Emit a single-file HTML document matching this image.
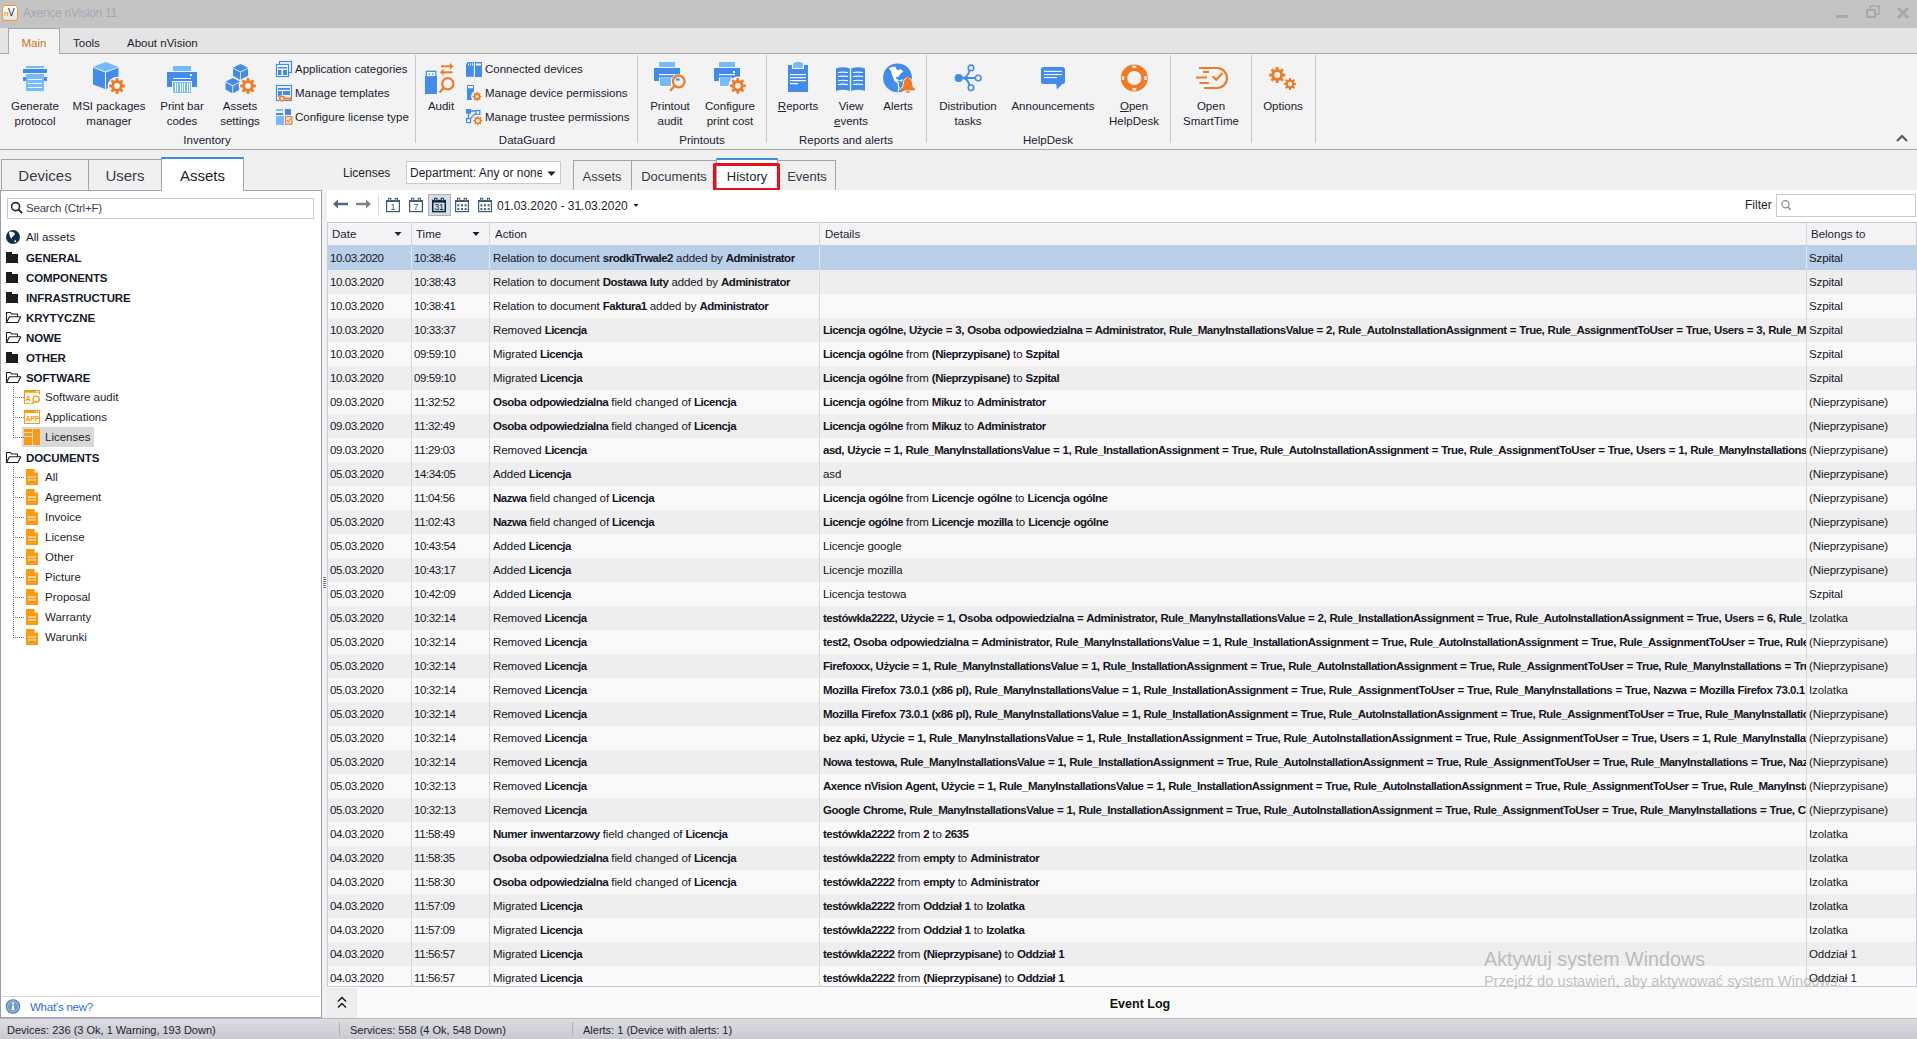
<!DOCTYPE html><html><head><meta charset="utf-8"><title>Axence nVision 11</title><style>
*{box-sizing:border-box}
html,body{margin:0;padding:0}
body{width:1917px;height:1039px;position:relative;overflow:hidden;background:#f0f0f0;font-family:"Liberation Sans",sans-serif;color:#1e1e2e;font-size:12px}
.a{position:absolute;white-space:nowrap}
b{font-weight:bold}
.rib{font-size:11.5px;color:#202030;text-align:center;line-height:15px}
.gl{font-size:11.5px;color:#202030}
.sm{font-size:11.5px;color:#202030}
.sep{position:absolute;width:1px;background:#c8c8c8}
.tree{font-size:12px;color:#1e1e2e}
.tb{font-weight:bold;font-size:12px;color:#101828}
.row{position:absolute;left:328px;width:1588px;height:24px;font-size:11.5px;line-height:24px;color:#15151f}
.c{position:absolute;top:0;height:24px;overflow:hidden;white-space:nowrap;letter-spacing:-0.1px}
.c b{letter-spacing:-0.5px;word-spacing:0.6px}
.c.d{letter-spacing:-0.4px}
.vl{position:absolute;top:0;width:1px;height:24px;background:#d6d6dc}
</style></head><body>
<div class="a" style="left:0;top:0;width:1917px;height:28px;background:#c4c4c4"></div>
<div class="a" style="left:2px;top:5px;width:16px;height:16px;border:1.5px solid #f59a1b;border-radius:3px;background:linear-gradient(#ffffff,#e4e4e4)"></div>
<div class="a" style="left:4px;top:6px;font-size:10px;line-height:14px;letter-spacing:-0.5px"><span style="color:#e8800c;font-size:8px">n</span><span style="color:#1a2a40">V</span></div>
<div class="a" style="left:23px;top:4.5px;font-size:12px;line-height:16px;color:#a6a6b4;letter-spacing:-0.25px">Axence nVision 11</div>
<div class="a" style="left:1836px;top:14.5px;width:12px;height:3px;background:#a8a8a8"></div>
<svg class="a" style="left:1866px;top:5px" width="14" height="14" viewBox="0 0 14 14"><rect x="1" y="5" width="8" height="7" fill="none" stroke="#a8a8a8" stroke-width="2"/><path d="M4 4V1h9v8h-3" fill="none" stroke="#a8a8a8" stroke-width="1.6"/></svg>
<svg class="a" style="left:1896px;top:6px" width="14" height="14" viewBox="0 0 14 14"><path d="M2 2L12 12M12 2L2 12" stroke="#a8a8a8" stroke-width="2.6"/></svg>
<div class="a" style="left:0;top:28px;width:1917px;height:26px;background:#e4e4e4;border-bottom:1px solid #a8a8a8"></div>
<div class="a" style="left:8px;top:28px;width:52px;height:27px;background:#f3f3f3;border:1px solid #a8a8a8;border-bottom:none"></div>
<div class="a" style="left:21.5px;top:35.5px;font-size:11.5px;line-height:14px;color:#c8781a">Main</div>
<div class="a" style="left:73px;top:35.5px;font-size:11.5px;line-height:14px;color:#1e1e2e">Tools</div>
<div class="a" style="left:127px;top:35.5px;font-size:11.5px;line-height:14px;color:#1e1e2e">About nVision</div>
<div class="a" style="left:0;top:54px;width:1917px;height:96px;background:#f3f3f3;border-bottom:1px solid #a8a8a8"></div>
<div class="sep" style="left:415px;top:55px;height:88px"></div>
<div class="sep" style="left:637px;top:55px;height:88px"></div>
<div class="sep" style="left:766px;top:55px;height:88px"></div>
<div class="sep" style="left:926px;top:55px;height:88px"></div>
<div class="sep" style="left:1170px;top:55px;height:88px"></div>
<div class="sep" style="left:1251px;top:55px;height:88px"></div>
<div class="sep" style="left:1315px;top:55px;height:88px"></div>
<svg class="a" style="left:0;top:0" width="1917" height="150" viewBox="0 0 1917 150"><rect x="26" y="66" width="18" height="2" fill="#73bbfd"/><rect x="23" y="69" width="24" height="4" fill="#418cea"/><rect x="23" y="77" width="24" height="4" fill="#418cea"/><rect x="26" y="74" width="18" height="17" fill="#73bbfd"/><rect x="28" y="79" width="14" height="1" fill="#fff"/><rect x="28" y="83" width="14" height="1" fill="#fff"/><rect x="28" y="87" width="14" height="1" fill="#fff"/><polygon points="93,67 105.5,62 118.5,67 105.5,71.5" fill="#73bbfd"/><polygon points="93,67.8 105,72.5 105,89 93,84.5" fill="#418cea"/><polygon points="106,72.5 118.5,67.8 118.5,84.5 106,89" fill="#418cea"/><circle cx="117.00" cy="86.00" r="9.30" fill="#f3f3f3"/><polygon points="122.58,84.58 124.90,84.71 124.90,87.29 122.58,87.42 121.95,88.95 123.50,90.67 121.67,92.50 119.95,90.95 118.42,91.58 118.29,93.90 115.71,93.90 115.58,91.58 114.05,90.95 112.33,92.50 110.50,90.67 112.05,88.95 111.42,87.42 109.10,87.29 109.10,84.71 111.42,84.58 112.05,83.05 110.50,81.33 112.33,79.50 114.05,81.05 115.58,80.42 115.71,78.10 118.29,78.10 118.42,80.42 119.95,81.05 121.67,79.50 123.50,81.33 121.95,83.05" fill="#ef7b26"/><circle cx="117.00" cy="86.00" r="5.36" fill="#ef7b26"/><circle cx="117.00" cy="86.00" r="2.88" fill="#f3f3f3"/><rect x="173" y="66" width="18" height="5" fill="#73bbfd"/><rect x="167" y="72" width="30" height="15" fill="#418cea"/><rect x="190" y="74" width="2" height="2" fill="#fff"/><rect x="173" y="78" width="18" height="1" fill="#fff"/><rect x="172" y="81" width="20" height="13" fill="#fff"/><rect x="173" y="82" width="18" height="11" fill="#73bbfd"/><rect x="175" y="83" width="1" height="9" fill="#fff"/><rect x="177" y="83" width="1" height="9" fill="#fff"/><rect x="180" y="83" width="1" height="9" fill="#fff"/><rect x="182" y="83" width="1" height="9" fill="#fff"/><rect x="184" y="83" width="1" height="9" fill="#fff"/><rect x="187" y="83" width="1" height="9" fill="#fff"/><rect x="189" y="83" width="1" height="9" fill="#fff"/><polygon points="233.0,67.8 240.5,64.0 248.0,67.8 240.5,71.5" fill="#418cea"/><polygon points="233.0,68.5 240.1,72.3 240.1,79.8 233.0,76.0" fill="#418cea"/><polygon points="240.9,72.3 248.0,68.5 248.0,76.0 240.9,79.8" fill="#418cea"/><polygon points="225.5,81.6 232.8,78.0 240.0,81.6 232.8,85.2" fill="#418cea"/><polygon points="225.5,82.4 232.3,86.0 232.3,93.2 225.5,89.6" fill="#418cea"/><polygon points="233.2,86.0 240.0,82.4 240.0,89.6 233.2,93.2" fill="#418cea"/><circle cx="248.00" cy="86.00" r="9.30" fill="#f3f3f3"/><polygon points="253.58,84.58 255.90,84.71 255.90,87.29 253.58,87.42 252.95,88.95 254.50,90.67 252.67,92.50 250.95,90.95 249.42,91.58 249.29,93.90 246.71,93.90 246.58,91.58 245.05,90.95 243.33,92.50 241.50,90.67 243.05,88.95 242.42,87.42 240.10,87.29 240.10,84.71 242.42,84.58 243.05,83.05 241.50,81.33 243.33,79.50 245.05,81.05 246.58,80.42 246.71,78.10 249.29,78.10 249.42,80.42 250.95,81.05 252.67,79.50 254.50,81.33 252.95,83.05" fill="#ef7b26"/><circle cx="248.00" cy="86.00" r="5.36" fill="#ef7b26"/><circle cx="248.00" cy="86.00" r="2.88" fill="#f3f3f3"/><rect x="279.5" y="61.5" width="12" height="11" fill="none" stroke="#418cea" stroke-width="1.2"/><rect x="276.5" y="64.5" width="12" height="12" fill="#fff" stroke="#418cea" stroke-width="1.2"/><rect x="278" y="67" width="9" height="1.5" fill="#418cea"/><rect x="278" y="70" width="3.5" height="5" fill="#418cea"/><rect x="283" y="70" width="4" height="5" fill="#418cea"/><rect x="276.5" y="85.5" width="15" height="15" fill="none" stroke="#418cea" stroke-width="1.2"/><rect x="278" y="88" width="12" height="1.8" fill="#418cea"/><rect x="278" y="91" width="4" height="6" fill="#418cea"/><rect x="283" y="91" width="7" height="4" fill="#418cea"/><circle cx="282" cy="98.5" r="3.2" fill="#f3f3f3"/><circle cx="282" cy="98.5" r="2.3" fill="none" stroke="#ef7b26" stroke-width="1.6"/><rect x="284" y="97.5" width="8" height="2" fill="#ef7b26"/><rect x="289" y="98" width="1.5" height="3" fill="#ef7b26"/><rect x="276" y="109" width="7" height="2" fill="#73bbfd"/><rect x="276" y="113" width="7" height="2" fill="#418cea"/><rect x="276" y="116" width="8" height="9" fill="#73bbfd"/><rect x="285" y="109" width="6" height="6" fill="#418cea"/><rect x="285.6" y="116.6" width="6.3" height="7.6" fill="none" stroke="#ef7b26" stroke-width="1.2"/><path d="M286.8 120 L288.3 122 L291 118" fill="none" stroke="#ef7b26" stroke-width="1.2"/><rect x="425" y="76" width="12" height="18" fill="#418cea"/><rect x="426.3" y="71.3" width="9.5" height="5.5" fill="#fff" stroke="#418cea" stroke-width="1.3"/><rect x="428.5" y="73.3" width="1.4" height="1.6" fill="#418cea"/><rect x="432" y="73.3" width="1.4" height="1.6" fill="#418cea"/><rect x="441" y="65.3" width="10" height="2" fill="#ef7b26"/><polygon points="450,62.8 453.5,66.3 450,69.8" fill="#ef7b26"/><rect x="442.5" y="71.3" width="10" height="2" fill="#ef7b26"/><polygon points="443.5,68.8 440,72.3 443.5,75.8" fill="#ef7b26"/><circle cx="447.8" cy="83.7" r="5.6" fill="none" stroke="#ef7b26" stroke-width="2.2"/><path d="M443.8 87.8 L439.5 92.5" stroke="#ef7b26" stroke-width="2.4"/><path d="M466 64.5 L467.5 62 H473.8 V76.8 H466 Z" fill="#418cea"/><rect x="475" y="62" width="7" height="15" fill="#418cea"/><rect x="468" y="63.5" width="0.9" height="2" fill="#fff"/><rect x="470" y="63.3" width="0.9" height="2.2" fill="#fff"/><rect x="472" y="63.3" width="0.9" height="2.2" fill="#fff"/><rect x="476" y="63.5" width="5" height="2" fill="#fff"/><rect x="467" y="85" width="7" height="15" fill="#418cea"/><rect x="468" y="86" width="5" height="2.2" fill="#fff"/><circle cx="477.00" cy="96.50" r="5.90" fill="#f3f3f3"/><polygon points="480.21,95.69 481.54,95.76 481.54,97.24 480.21,97.31 479.85,98.19 480.73,99.19 479.69,100.23 478.69,99.35 477.81,99.71 477.74,101.04 476.26,101.04 476.19,99.71 475.31,99.35 474.31,100.23 473.27,99.19 474.15,98.19 473.79,97.31 472.46,97.24 472.46,95.76 473.79,95.69 474.15,94.81 473.27,93.81 474.31,92.77 475.31,93.65 476.19,93.29 476.26,91.96 477.74,91.96 477.81,93.29 478.69,93.65 479.69,92.77 480.73,93.81 479.85,94.81" fill="#ef7b26"/><circle cx="477.00" cy="96.50" r="3.08" fill="#ef7b26"/><circle cx="477.00" cy="96.50" r="1.60" fill="#f3f3f3"/><path d="M468.5 113.5 V118.5 M470.5 111 H475.5 M470 119 L476 113" stroke="#418cea" stroke-width="1.3" fill="none"/><rect x="466" y="109" width="5" height="4.8" fill="#418cea"/><rect x="475.8" y="110.6" width="4" height="3.8" fill="#fff" stroke="#418cea" stroke-width="1.3"/><rect x="466.6" y="118.6" width="3.9" height="4" fill="#fff" stroke="#418cea" stroke-width="1.3"/><circle cx="477.80" cy="120.70" r="5.90" fill="#f3f3f3"/><polygon points="481.01,119.89 482.34,119.96 482.34,121.44 481.01,121.51 480.65,122.39 481.53,123.39 480.49,124.43 479.49,123.55 478.61,123.91 478.54,125.24 477.06,125.24 476.99,123.91 476.11,123.55 475.11,124.43 474.07,123.39 474.95,122.39 474.59,121.51 473.26,121.44 473.26,119.96 474.59,119.89 474.95,119.01 474.07,118.01 475.11,116.97 476.11,117.85 476.99,117.49 477.06,116.16 478.54,116.16 478.61,117.49 479.49,117.85 480.49,116.97 481.53,118.01 480.65,119.01" fill="#ef7b26"/><circle cx="477.80" cy="120.70" r="3.08" fill="#ef7b26"/><circle cx="477.80" cy="120.70" r="1.90" fill="#f3f3f3"/><rect x="659" y="62" width="16" height="5" fill="#73bbfd"/><rect x="654" y="68" width="26" height="13" fill="#418cea"/><rect x="659" y="74" width="16" height="1.2" fill="#fff"/><rect x="659" y="77.5" width="13" height="9" fill="#fff"/><rect x="660" y="78" width="11" height="8" fill="#73bbfd"/><circle cx="678.8" cy="81.5" r="7.6" fill="#f3f3f3"/><circle cx="678.8" cy="81.5" r="5.8" fill="none" stroke="#ef7b26" stroke-width="2.2"/><path d="M674.5 86 L670.2 90.8" stroke="#ef7b26" stroke-width="2.4"/><rect x="676" y="78.3" width="3.5" height="2.3" fill="#418cea"/><rect x="719" y="62" width="16" height="5" fill="#73bbfd"/><rect x="714" y="68" width="26" height="13" fill="#418cea"/><rect x="733" y="71" width="2" height="2" fill="#fff"/><rect x="719" y="74" width="16" height="1.2" fill="#fff"/><rect x="719" y="77.5" width="13" height="9" fill="#fff"/><rect x="720" y="78" width="11" height="8" fill="#73bbfd"/><circle cx="737.80" cy="85.80" r="9.30" fill="#f3f3f3"/><polygon points="743.38,84.38 745.70,84.51 745.70,87.09 743.38,87.22 742.75,88.75 744.30,90.47 742.47,92.30 740.75,90.75 739.22,91.38 739.09,93.70 736.51,93.70 736.38,91.38 734.85,90.75 733.13,92.30 731.30,90.47 732.85,88.75 732.22,87.22 729.90,87.09 729.90,84.51 732.22,84.38 732.85,82.85 731.30,81.13 733.13,79.30 734.85,80.85 736.38,80.22 736.51,77.90 739.09,77.90 739.22,80.22 740.75,80.85 742.47,79.30 744.30,81.13 742.75,82.85" fill="#ef7b26"/><circle cx="737.80" cy="85.80" r="5.36" fill="#ef7b26"/><circle cx="737.80" cy="85.80" r="2.88" fill="#f3f3f3"/><rect x="788" y="65" width="20" height="27" fill="#418cea"/><rect x="792" y="63" width="12" height="6" fill="#fff"/><rect x="793" y="63" width="10" height="5" fill="#73bbfd"/><rect x="795" y="62" width="6" height="2" fill="#73bbfd"/><rect x="790" y="74" width="16" height="1.2" fill="#fff"/><rect x="790" y="77" width="16" height="1.2" fill="#fff"/><rect x="790" y="80" width="16" height="1.2" fill="#fff"/><rect x="790" y="83" width="8" height="1.2" fill="#fff"/><path d="M836 68.5 Q843 66 849.8 68.5 V91 Q843 88.5 836 91 Z" fill="#418cea"/><path d="M851.2 68.5 Q858 66 865 68.5 V91 Q858 88.5 851.2 91 Z" fill="#418cea"/><path d="M838 72.5 Q843 71.7 848 72.5 M853 72.5 Q858 71.7 863 72.5" stroke="#fff" stroke-width="1.1" fill="none"/><path d="M838 76.5 Q843 75.7 848 76.5 M853 76.5 Q858 75.7 863 76.5" stroke="#fff" stroke-width="1.1" fill="none"/><path d="M838 80.7 Q843 79.9 848 80.7 M853 80.7 Q858 79.9 863 80.7" stroke="#fff" stroke-width="1.1" fill="none"/><path d="M838 84.5 Q843 83.7 848 84.5 M853 84.5 Q858 83.7 863 84.5" stroke="#fff" stroke-width="1.1" fill="none"/><circle cx="897.5" cy="77.8" r="14.4" fill="#418cea"/><path d="M888.8 68.6 L891.5 66.9 L895.6 66.7 L896.4 69.3 L898.3 70.2 L900.4 68.9 L903.5 71.5 L900.8 73.2 L899.2 75.5 L898.3 77.3 L896.8 76.3 L895.9 78.7 L897.9 79.4 L899.9 81.2 L902.3 81.5 L903 79 L897 81.5 L894.2 79.6 L892 75 L891 71 Z" fill="#fff"/><path d="M893.8 79.4 Q896.5 81.5 898.4 83 Q898.2 86 898.8 88 Q898.5 90 897.8 91.5" stroke="#fff" stroke-width="1.3" fill="none"/><path d="M901 89 Q903.5 87.5 903.8 83 Q904 78.8 907.7 78 Q911.5 78.8 912 83 Q912.3 87.5 915 89 Z" fill="#ef7b26" stroke="#f3f3f3" stroke-width="1.6"/><path d="M901 89 Q903.5 87.5 903.8 83 Q904 78.8 907.7 78 Q911.5 78.8 912 83 Q912.3 87.5 915 89 Z" fill="#ef7b26"/><rect x="900.8" y="88.2" width="14" height="2.2" fill="#ef7b26"/><rect x="906.7" y="76" width="2.2" height="3" fill="#ef7b26"/><path d="M905.6 91.3 H910 Q909.5 93 907.8 93 Q906.1 93 905.6 91.3 Z" fill="#ef7b26"/><path d="M959 78 H975.5 M963 78 Q967.5 77.5 969.7 70.2 M963 78 Q967.5 78.5 969.7 85.6" stroke="#418cea" stroke-width="1.9" fill="none"/><circle cx="958.7" cy="78" r="4.1" fill="#418cea"/><circle cx="971.0" cy="67.9" r="2.75" fill="#fff" stroke="#418cea" stroke-width="1.6"/><circle cx="978.2" cy="78.0" r="2.75" fill="#fff" stroke="#418cea" stroke-width="1.6"/><circle cx="971.0" cy="87.8" r="2.75" fill="#fff" stroke="#418cea" stroke-width="1.6"/><rect x="1041" y="67" width="24" height="17" rx="2.5" fill="#418cea"/><polygon points="1056,83 1063,83 1057,89.5" fill="#418cea"/><rect x="1044" y="70.8" width="18" height="1.1" fill="#fff"/><rect x="1044" y="74" width="18" height="1.1" fill="#fff"/><rect x="1044" y="77" width="13" height="1.1" fill="#fff"/><circle cx="1134.3" cy="78" r="10.3" fill="none" stroke="#ef7b26" stroke-width="6.4"/><rect x="1132.3" y="65.5" width="4" height="2.6" fill="#f3f3f3" opacity="0.85" transform="rotate(0 1134.3 78)"/><rect x="1132.3" y="65.5" width="4" height="2.6" fill="#f3f3f3" opacity="0.85" transform="rotate(90 1134.3 78)"/><rect x="1132.3" y="65.5" width="4" height="2.6" fill="#f3f3f3" opacity="0.85" transform="rotate(180 1134.3 78)"/><rect x="1132.3" y="65.5" width="4" height="2.6" fill="#f3f3f3" opacity="0.85" transform="rotate(270 1134.3 78)"/><path d="M1199 68 H1217 A10 10 0 0 1 1217 88 H1204" fill="none" stroke="#ef7b26" stroke-width="2.2"/><path d="M1203 72 H1209 M1196 77.5 H1207 M1199.5 83 H1209" stroke="#ef7b26" stroke-width="2.2"/><path d="M1212.5 76.5 L1216.3 79.8 L1222.5 73" fill="none" stroke="#ef7b26" stroke-width="2.2"/><polygon points="1282.92,73.55 1285.29,73.68 1285.29,76.32 1282.92,76.45 1282.27,78.02 1283.86,79.79 1281.99,81.66 1280.22,80.07 1278.65,80.72 1278.52,83.09 1275.88,83.09 1275.75,80.72 1274.18,80.07 1272.41,81.66 1270.54,79.79 1272.13,78.02 1271.48,76.45 1269.11,76.32 1269.11,73.68 1271.48,73.55 1272.13,71.98 1270.54,70.21 1272.41,68.34 1274.18,69.93 1275.75,69.28 1275.88,66.91 1278.52,66.91 1278.65,69.28 1280.22,69.93 1281.99,68.34 1283.86,70.21 1282.27,71.98" fill="#ef7b26"/><circle cx="1277.20" cy="75.00" r="5.49" fill="#ef7b26"/><circle cx="1277.20" cy="75.00" r="3.00" fill="#f3f3f3"/><circle cx="1290.00" cy="84.00" r="7.50" fill="#f3f3f3"/><polygon points="1294.33,82.90 1296.12,83.00 1296.12,85.00 1294.33,85.10 1293.84,86.28 1295.03,87.62 1293.62,89.03 1292.28,87.84 1291.10,88.33 1291.00,90.12 1289.00,90.12 1288.90,88.33 1287.72,87.84 1286.38,89.03 1284.97,87.62 1286.16,86.28 1285.67,85.10 1283.88,85.00 1283.88,83.00 1285.67,82.90 1286.16,81.72 1284.97,80.38 1286.38,78.97 1287.72,80.16 1288.90,79.67 1289.00,77.88 1291.00,77.88 1291.10,79.67 1292.28,80.16 1293.62,78.97 1295.03,80.38 1293.84,81.72" fill="#ef7b26"/><circle cx="1290.00" cy="84.00" r="4.15" fill="#ef7b26"/><circle cx="1290.00" cy="84.00" r="2.20" fill="#f3f3f3"/><path d="M1897 141 L1902 136 L1907 141" fill="none" stroke="#555" stroke-width="2"/></svg>
<div class="a rib" style="left:35px;top:98.5px;width:120px;margin-left:-60px">Generate<br>protocol</div>
<div class="a rib" style="left:109px;top:98.5px;width:120px;margin-left:-60px">MSI packages<br>manager</div>
<div class="a rib" style="left:182px;top:98.5px;width:120px;margin-left:-60px">Print bar<br>codes</div>
<div class="a rib" style="left:240px;top:98.5px;width:120px;margin-left:-60px">Assets<br>settings</div>
<div class="a rib" style="left:441px;top:98.5px;width:120px;margin-left:-60px">Audit</div>
<div class="a rib" style="left:670px;top:98.5px;width:120px;margin-left:-60px">Printout<br>audit</div>
<div class="a rib" style="left:730px;top:98.5px;width:120px;margin-left:-60px">Configure<br>print cost</div>
<div class="a rib" style="left:798px;top:98.5px;width:120px;margin-left:-60px"><u>R</u>eports</div>
<div class="a rib" style="left:851px;top:98.5px;width:120px;margin-left:-60px">View<br><u>e</u>vents</div>
<div class="a rib" style="left:898px;top:98.5px;width:120px;margin-left:-60px">Alerts</div>
<div class="a rib" style="left:968px;top:98.5px;width:120px;margin-left:-60px">Distribution<br>tasks</div>
<div class="a rib" style="left:1053px;top:98.5px;width:120px;margin-left:-60px">Announcements</div>
<div class="a rib" style="left:1134px;top:98.5px;width:120px;margin-left:-60px"><u>O</u>pen<br>HelpDesk</div>
<div class="a rib" style="left:1211px;top:98.5px;width:120px;margin-left:-60px">Open<br>SmartTime</div>
<div class="a rib" style="left:1283px;top:98.5px;width:120px;margin-left:-60px">Options</div>
<div class="a rib" style="left:207px;top:132.5px;width:160px;margin-left:-80px">Inventory</div>
<div class="a rib" style="left:527px;top:132.5px;width:160px;margin-left:-80px">DataGuard</div>
<div class="a rib" style="left:702px;top:132.5px;width:160px;margin-left:-80px">Printouts</div>
<div class="a rib" style="left:846px;top:132.5px;width:160px;margin-left:-80px">Reports and alerts</div>
<div class="a rib" style="left:1048px;top:132.5px;width:160px;margin-left:-80px">HelpDesk</div>
<div class="a sm" style="left:295px;top:61.5px;line-height:15px">Application categories</div>
<div class="a sm" style="left:295px;top:85.5px;line-height:15px">Manage templates</div>
<div class="a sm" style="left:295px;top:109.5px;line-height:15px">Configure license type</div>
<div class="a sm" style="left:485px;top:61.5px;line-height:15px">Connected devices</div>
<div class="a sm" style="left:485px;top:85.5px;line-height:15px">Manage device permissions</div>
<div class="a sm" style="left:485px;top:109.5px;line-height:15px">Manage trustee permissions</div>
<div class="a" style="left:0;top:190px;width:322px;height:828px;background:#fff;border:1px solid #9a9eac;border-top:1px solid #a0a4b0"></div>
<div class="a" style="left:1px;top:159px;width:88px;height:31px;background:#f0f0f0;border:1px solid #a0a4b0;border-bottom:none"></div>
<div class="a" style="left:88px;top:159px;width:74px;height:31px;background:#f0f0f0;border:1px solid #a0a4b0;border-bottom:none"></div>
<div class="a" style="left:161px;top:157px;width:83px;height:34px;background:#fff;border:1px solid #a0a4b0;border-bottom:none;border-top:2px solid #3b8ce3"></div>
<div class="a" style="left:1px;top:166px;width:88px;text-align:center;font-size:15px;line-height:20px;color:#3a3a4a">Devices</div>
<div class="a" style="left:89px;top:166px;width:72px;text-align:center;font-size:15px;line-height:20px;color:#3a3a4a">Users</div>
<div class="a" style="left:161px;top:166px;width:83px;text-align:center;font-size:15px;line-height:20px;color:#1e1e2e">Assets</div>
<div class="a" style="left:7px;top:198px;width:307px;height:21px;border:1px solid #c8c8d0;background:#fff"></div>
<svg class="a" style="left:10px;top:201px" width="14" height="14" viewBox="0 0 14 14"><circle cx="5.6" cy="5.6" r="4" fill="none" stroke="#1a2a3a" stroke-width="1.6"/><path d="M8.5 8.5L12 12" stroke="#1a2a3a" stroke-width="1.8"/></svg>
<div class="a" style="left:26px;top:201px;font-size:11.5px;line-height:14px;color:#404050;letter-spacing:-0.2px">Search (Ctrl+F)</div>
<div class="a" style="left:22px;top:427px;width:72px;height:20px;background:#d9d9d9"></div>
<svg class="a" style="left:0;top:0" width="330" height="700" viewBox="0 0 330 700"><circle cx="13" cy="237" r="7" fill="#0f2c4c"/><path d="M9 232 Q11 231 12.5 232 L14 232.5 L15 234 L13.5 236 L12 237 L11.5 239 Q10 237 9.5 235 Z" fill="#fff"/><circle cx="15.2" cy="241.3" r="1" fill="#fff"/><path d="M6 252 H12 V254 H18 V263 H6 Z" fill="#1c1c1c"/><path d="M6 272 H12 V274 H18 V283 H6 Z" fill="#1c1c1c"/><path d="M6 292 H12 V294 H18 V303 H6 Z" fill="#1c1c1c"/><path d="M6.5 322.5 V312.5 H10.5 L11.5 314.0 H17.5 V316.8 M6.5 322.5 L9.5 316.8 H20.8 L17.8 322.5 Z" fill="none" stroke="#1c1c1c" stroke-width="1.1" stroke-linejoin="round"/><path d="M6.5 342.5 V332.5 H10.5 L11.5 334.0 H17.5 V336.8 M6.5 342.5 L9.5 336.8 H20.8 L17.8 342.5 Z" fill="none" stroke="#1c1c1c" stroke-width="1.1" stroke-linejoin="round"/><path d="M6 352 H12 V354 H18 V363 H6 Z" fill="#1c1c1c"/><path d="M6.5 382.5 V372.5 H10.5 L11.5 374.0 H17.5 V376.8 M6.5 382.5 L9.5 376.8 H20.8 L17.8 382.5 Z" fill="none" stroke="#1c1c1c" stroke-width="1.1" stroke-linejoin="round"/><path d="M30 403.5 H24.5 V390.5 H39.5 V394.5" fill="none" stroke="#fb9a10" stroke-width="1"/><rect x="24" y="390.0" width="16" height="2.7" fill="#fb9a10"/><rect x="35.8" y="390.8" width="1.2" height="1.2" fill="#fff"/><rect x="37.8" y="390.8" width="1.2" height="1.2" fill="#fff"/><text x="25.6" y="401.4" font-size="7.6" font-family="Liberation Sans" font-weight="bold" fill="#fb9a10">A</text><circle cx="36.2" cy="399.3" r="3.1" fill="#fff" stroke="#fb9a10" stroke-width="1.3"/><path d="M34 401.6 L31.6 404.0" stroke="#fb9a10" stroke-width="1.5"/><path d="M13 397.5 H24" stroke="#707070" stroke-width="1" stroke-dasharray="1 1"/><rect x="24.5" y="410.5" width="15" height="13" fill="#fff" stroke="#fb9a10" stroke-width="1"/><rect x="24" y="410.0" width="16" height="3" fill="#fb9a10"/><rect x="35.8" y="410.9" width="1.2" height="1.2" fill="#fff"/><rect x="37.8" y="410.9" width="1.2" height="1.2" fill="#fff"/><text x="25.6" y="421.3" font-size="7" font-family="Liberation Sans" font-weight="bold" letter-spacing="-0.35" fill="#fb9a10">APP</text><path d="M13 417.5 H24" stroke="#707070" stroke-width="1" stroke-dasharray="1 1"/><rect x="24" y="429.0" width="8" height="3" fill="#fb9a10"/><rect x="24" y="433.0" width="8" height="3" fill="#fb9a10"/><rect x="24" y="437.0" width="8" height="8" fill="#fb9a10"/><rect x="33" y="429.0" width="7" height="16" fill="#fb9a10"/><path d="M13 437.5 H24" stroke="#707070" stroke-width="1" stroke-dasharray="1 1"/><path d="M6.5 462.5 V452.5 H10.5 L11.5 454.0 H17.5 V456.8 M6.5 462.5 L9.5 456.8 H20.8 L17.8 462.5 Z" fill="none" stroke="#1c1c1c" stroke-width="1.1" stroke-linejoin="round"/><path d="M26 469.0 H34 L38 473.0 V485.0 H26 Z" fill="#fb9a10"/><path d="M34.6 469.8 V472.6 H37.6" fill="#fff"/><rect x="28" y="476.5" width="8" height="1" fill="#fff"/><rect x="28" y="479.5" width="8" height="1" fill="#fff"/><path d="M13 477.5 H24" stroke="#707070" stroke-width="1" stroke-dasharray="1 1"/><path d="M26 489.0 H34 L38 493.0 V505.0 H26 Z" fill="#fb9a10"/><path d="M34.6 489.8 V492.6 H37.6" fill="#fff"/><rect x="28" y="496.5" width="8" height="1" fill="#fff"/><rect x="28" y="499.5" width="8" height="1" fill="#fff"/><path d="M13 497.5 H24" stroke="#707070" stroke-width="1" stroke-dasharray="1 1"/><path d="M26 509.0 H34 L38 513.0 V525.0 H26 Z" fill="#fb9a10"/><path d="M34.6 509.8 V512.6 H37.6" fill="#fff"/><rect x="28" y="516.5" width="8" height="1" fill="#fff"/><rect x="28" y="519.5" width="8" height="1" fill="#fff"/><path d="M13 517.5 H24" stroke="#707070" stroke-width="1" stroke-dasharray="1 1"/><path d="M26 529.0 H34 L38 533.0 V545.0 H26 Z" fill="#fb9a10"/><path d="M34.6 529.8 V532.6 H37.6" fill="#fff"/><rect x="28" y="536.5" width="8" height="1" fill="#fff"/><rect x="28" y="539.5" width="8" height="1" fill="#fff"/><path d="M13 537.5 H24" stroke="#707070" stroke-width="1" stroke-dasharray="1 1"/><path d="M26 549.0 H34 L38 553.0 V565.0 H26 Z" fill="#fb9a10"/><path d="M34.6 549.8 V552.6 H37.6" fill="#fff"/><rect x="28" y="556.5" width="8" height="1" fill="#fff"/><rect x="28" y="559.5" width="8" height="1" fill="#fff"/><path d="M13 557.5 H24" stroke="#707070" stroke-width="1" stroke-dasharray="1 1"/><path d="M26 569.0 H34 L38 573.0 V585.0 H26 Z" fill="#fb9a10"/><path d="M34.6 569.8 V572.6 H37.6" fill="#fff"/><rect x="28" y="576.5" width="8" height="1" fill="#fff"/><rect x="28" y="579.5" width="8" height="1" fill="#fff"/><path d="M13 577.5 H24" stroke="#707070" stroke-width="1" stroke-dasharray="1 1"/><path d="M26 589.0 H34 L38 593.0 V605.0 H26 Z" fill="#fb9a10"/><path d="M34.6 589.8 V592.6 H37.6" fill="#fff"/><rect x="28" y="596.5" width="8" height="1" fill="#fff"/><rect x="28" y="599.5" width="8" height="1" fill="#fff"/><path d="M13 597.5 H24" stroke="#707070" stroke-width="1" stroke-dasharray="1 1"/><path d="M26 609.0 H34 L38 613.0 V625.0 H26 Z" fill="#fb9a10"/><path d="M34.6 609.8 V612.6 H37.6" fill="#fff"/><rect x="28" y="616.5" width="8" height="1" fill="#fff"/><rect x="28" y="619.5" width="8" height="1" fill="#fff"/><path d="M13 617.5 H24" stroke="#707070" stroke-width="1" stroke-dasharray="1 1"/><path d="M26 629.0 H34 L38 633.0 V645.0 H26 Z" fill="#fb9a10"/><path d="M34.6 629.8 V632.6 H37.6" fill="#fff"/><rect x="28" y="636.5" width="8" height="1" fill="#fff"/><rect x="28" y="639.5" width="8" height="1" fill="#fff"/><path d="M13 637.5 H24" stroke="#707070" stroke-width="1" stroke-dasharray="1 1"/><path d="M13.5 387 V437.5" stroke="#707070" stroke-width="1" stroke-dasharray="1 1"/><path d="M13.5 467 V637.5" stroke="#707070" stroke-width="1" stroke-dasharray="1 1"/></svg>
<div class="a" style="left:26px;top:230px;font-size:11.5px;line-height:14px;color:#1e1e2e">All assets</div>
<div class="a" style="left:26px;top:250.5px;font-size:11.5px;line-height:14px;font-weight:bold;color:#141a2a;letter-spacing:-0.1px">GENERAL</div>
<div class="a" style="left:26px;top:270.5px;font-size:11.5px;line-height:14px;font-weight:bold;color:#141a2a;letter-spacing:-0.1px">COMPONENTS</div>
<div class="a" style="left:26px;top:290.5px;font-size:11.5px;line-height:14px;font-weight:bold;color:#141a2a;letter-spacing:-0.1px">INFRASTRUCTURE</div>
<div class="a" style="left:26px;top:310.5px;font-size:11.5px;line-height:14px;font-weight:bold;color:#141a2a;letter-spacing:-0.1px">KRYTYCZNE</div>
<div class="a" style="left:26px;top:330.5px;font-size:11.5px;line-height:14px;font-weight:bold;color:#141a2a;letter-spacing:-0.1px">NOWE</div>
<div class="a" style="left:26px;top:350.5px;font-size:11.5px;line-height:14px;font-weight:bold;color:#141a2a;letter-spacing:-0.1px">OTHER</div>
<div class="a" style="left:26px;top:370.5px;font-size:11.5px;line-height:14px;font-weight:bold;color:#141a2a;letter-spacing:-0.1px">SOFTWARE</div>
<div class="a" style="left:45px;top:390px;font-size:11.5px;line-height:14px;color:#1e1e2e">Software audit</div>
<div class="a" style="left:45px;top:410px;font-size:11.5px;line-height:14px;color:#1e1e2e">Applications</div>
<div class="a" style="left:45px;top:430px;font-size:11.5px;line-height:14px;color:#1e1e2e">Licenses</div>
<div class="a" style="left:26px;top:450.5px;font-size:11.5px;line-height:14px;font-weight:bold;color:#141a2a;letter-spacing:-0.1px">DOCUMENTS</div>
<div class="a" style="left:45px;top:470px;font-size:11.5px;line-height:14px;color:#1e1e2e">All</div>
<div class="a" style="left:45px;top:490px;font-size:11.5px;line-height:14px;color:#1e1e2e">Agreement</div>
<div class="a" style="left:45px;top:510px;font-size:11.5px;line-height:14px;color:#1e1e2e">Invoice</div>
<div class="a" style="left:45px;top:530px;font-size:11.5px;line-height:14px;color:#1e1e2e">License</div>
<div class="a" style="left:45px;top:550px;font-size:11.5px;line-height:14px;color:#1e1e2e">Other</div>
<div class="a" style="left:45px;top:570px;font-size:11.5px;line-height:14px;color:#1e1e2e">Picture</div>
<div class="a" style="left:45px;top:590px;font-size:11.5px;line-height:14px;color:#1e1e2e">Proposal</div>
<div class="a" style="left:45px;top:610px;font-size:11.5px;line-height:14px;color:#1e1e2e">Warranty</div>
<div class="a" style="left:45px;top:630px;font-size:11.5px;line-height:14px;color:#1e1e2e">Warunki</div>
<div class="a" style="left:2px;top:996px;width:318px;height:1px;background:#d8d8dc"></div>
<svg class="a" style="left:5px;top:999px" width="16" height="16" viewBox="0 0 16 16"><circle cx="8" cy="7.5" r="6.7" fill="#9dbde0" stroke="#4f78a8" stroke-width="1.1"/><circle cx="8" cy="7.5" r="5" fill="#6d9ad0"/><rect x="7.1" y="6.4" width="1.9" height="4.6" fill="#fff"/><rect x="6.3" y="10.2" width="3.4" height="1" fill="#fff"/><rect x="7.1" y="3.5" width="1.9" height="1.9" fill="#fff"/></svg>
<div class="a" style="left:30px;top:1000px;font-size:11.5px;line-height:14px;color:#2a6fd8;letter-spacing:-0.25px">What&#8217;s new?</div>
<div class="a" style="left:0;top:1018px;width:1917px;height:21px;background:linear-gradient(#dcdce0,#c9c9d2);border-top:1px solid #b8b8c2"></div>
<div class="a" style="left:339px;top:1022px;width:1px;height:14px;background:#b0b0b8"></div>
<div class="a" style="left:572px;top:1022px;width:1px;height:14px;background:#b0b0b8"></div>
<div class="a" style="left:7px;top:1023px;font-size:11px;line-height:14px;color:#1e1e2e">Devices: 236 (3 Ok, 1 Warning, 193 Down)</div>
<div class="a" style="left:350px;top:1023px;font-size:11px;line-height:14px;color:#1e1e2e">Services: 558 (4 Ok, 548 Down)</div>
<div class="a" style="left:583px;top:1023px;font-size:11px;line-height:14px;color:#1e1e2e">Alerts: 1 (Device with alerts: 1)</div>
<div class="a" style="left:343px;top:166px;font-size:12px;line-height:14px;color:#1e1e2e">Licenses</div>
<div class="a" style="left:406px;top:161px;width:155px;height:23px;background:#fff;border:1px solid #c8c8d0"></div>
<div class="a" style="left:410px;top:166px;width:132px;overflow:hidden;font-size:12px;line-height:14px;color:#1e1e2e">Department: Any or none</div>
<svg class="a" style="left:547px;top:171px" width="9" height="6" viewBox="0 0 9 6"><path d="M0.5 0.5H8.5L4.5 5Z" fill="#1e1e2e"/></svg>
<div class="a" style="left:573px;top:160px;width:263px;height:30px;background:#f0f0f0;border:1px solid #a0a4b0;border-bottom:none"></div>
<div class="a" style="left:631px;top:161px;width:1px;height:29px;background:#a0a4b0"></div>
<div class="a" style="left:716px;top:158px;width:62px;height:32px;background:#fff;border-top:2px solid #3b8ce3;border-left:1px solid #a0a4b0;border-right:1px solid #a0a4b0"></div>
<div class="a" style="left:573px;top:169px;width:58px;text-align:center;font-size:13px;line-height:15px;color:#3a3a4a">Assets</div>
<div class="a" style="left:632px;top:169px;width:84px;text-align:center;font-size:13px;line-height:15px;color:#3a3a4a">Documents</div>
<div class="a" style="left:716px;top:169px;width:62px;text-align:center;font-size:13px;line-height:15px;color:#1e1e2e">History</div>
<div class="a" style="left:778px;top:169px;width:58px;text-align:center;font-size:13px;line-height:15px;color:#3a3a4a">Events</div>
<div class="a" style="left:713px;top:163px;width:67px;height:28px;border:3px solid #e8101a;border-radius:2px"></div>
<div class="a" style="left:327px;top:190px;width:1590px;height:828px;background:#fff"></div>
<div class="a" style="left:1776px;top:194px;width:140px;height:23px;border:1px solid #c8c8d0;background:#fff"></div>
<svg class="a" style="left:0;top:0" width="1917" height="230" viewBox="0 0 1917 230"><path d="M333 204 L338 199.5 V202.8 H348 V205.2 H338 V208.5 Z" fill="#56667c"/><path d="M371 204 L366 199.5 V202.8 H356 V205.2 H366 V208.5 Z" fill="#848484"/><rect x="378" y="195" width="1" height="20" fill="#dcdce0"/><rect x="428.5" y="194.5" width="22" height="21" fill="#d8dbe2" stroke="#a8adb8" stroke-width="1"/><rect x="386.60" y="200.6" width="12.80" height="11" fill="none" stroke="#3f5a72" stroke-width="1.2"/><rect x="386.0" y="200" width="14" height="2.0" fill="#3f5a72"/><rect x="388.6" y="198.3" width="2.2" height="2.5" fill="#fff" stroke="#3f5a72" stroke-width="1"/><rect x="395.2" y="198.3" width="2.2" height="2.5" fill="#fff" stroke="#3f5a72" stroke-width="1"/><text x="393.0" y="210" font-size="9" font-family="Liberation Sans" text-anchor="middle" fill="#3f5a72" >1</text><rect x="409.60" y="200.6" width="12.80" height="11" fill="none" stroke="#3f5a72" stroke-width="1.2"/><rect x="409.0" y="200" width="14" height="2.0" fill="#3f5a72"/><rect x="411.6" y="198.3" width="2.2" height="2.5" fill="#fff" stroke="#3f5a72" stroke-width="1"/><rect x="418.2" y="198.3" width="2.2" height="2.5" fill="#fff" stroke="#3f5a72" stroke-width="1"/><text x="416.0" y="210" font-size="9" font-family="Liberation Sans" text-anchor="middle" fill="#3f5a72" >7</text><rect x="432.75" y="200.6" width="12.50" height="11" fill="none" stroke="#0b2a4a" stroke-width="1.5"/><rect x="432.0" y="200" width="14" height="2.6" fill="#0b2a4a"/><rect x="434.6" y="198.3" width="2.2" height="2.5" fill="#fff" stroke="#0b2a4a" stroke-width="1"/><rect x="441.2" y="198.3" width="2.2" height="2.5" fill="#fff" stroke="#0b2a4a" stroke-width="1"/><text x="439.0" y="210" font-size="8.6" font-family="Liberation Sans" text-anchor="middle" fill="#0b2a4a" letter-spacing="-0.4">31</text><rect x="455.60" y="200.6" width="12.80" height="11" fill="none" stroke="#3f5a72" stroke-width="1.2"/><rect x="455.0" y="200" width="14" height="2.0" fill="#3f5a72"/><rect x="457.6" y="198.3" width="2.2" height="2.5" fill="#fff" stroke="#3f5a72" stroke-width="1"/><rect x="464.2" y="198.3" width="2.2" height="2.5" fill="#fff" stroke="#3f5a72" stroke-width="1"/><rect x="457.4" y="204.3" width="2" height="2" fill="#3f5a72"/><rect x="457.4" y="208.1" width="2" height="2" fill="#3f5a72"/><rect x="461.0" y="204.3" width="2" height="2" fill="#3f5a72"/><rect x="461.0" y="208.1" width="2" height="2" fill="#3f5a72"/><rect x="464.6" y="204.3" width="2" height="2" fill="#3f5a72"/><rect x="464.6" y="208.1" width="2" height="2" fill="#3f5a72"/><rect x="478.60" y="200.6" width="12.80" height="11" fill="none" stroke="#3f5a72" stroke-width="1.2"/><rect x="478.0" y="200" width="14" height="2.0" fill="#3f5a72"/><rect x="480.6" y="198.3" width="2.2" height="2.5" fill="#fff" stroke="#3f5a72" stroke-width="1"/><rect x="487.2" y="198.3" width="2.2" height="2.5" fill="#fff" stroke="#3f5a72" stroke-width="1"/><rect x="480.4" y="204.3" width="2" height="2" fill="#3f5a72"/><rect x="480.4" y="208.1" width="2" height="2" fill="#3f5a72"/><rect x="484.0" y="204.3" width="2" height="2" fill="#3f5a72"/><rect x="484.0" y="208.1" width="2" height="2" fill="#3f5a72"/><rect x="487.6" y="204.3" width="2" height="2" fill="#3f5a72"/><rect x="487.6" y="208.1" width="2" height="2" fill="#3f5a72"/><path d="M633.5 204 H638.5 L636 207 Z" fill="#1e1e2e"/><circle cx="1785.5" cy="204.3" r="3.6" fill="none" stroke="#8a8a94" stroke-width="1.2"/><path d="M1788 207 L1790.5 209.8" stroke="#8a8a94" stroke-width="1.4"/></svg>
<div class="a" style="left:497px;top:199px;font-size:12px;line-height:14px;color:#1e1e2e">01.03.2020 - 31.03.2020</div>
<div class="a" style="left:1745px;top:198px;font-size:12px;line-height:14px;color:#1e1e2e">Filter</div>
<div class="a" style="left:327px;top:222px;width:1590px;height:765px;border:1px solid #c9cad4;background:#fff"></div>
<div class="a" style="left:328px;top:223px;width:1588px;height:23px;background:#f3f3f6;border-bottom:1px solid #c9cad4"></div>
<div class="a" style="left:332px;top:227px;font-size:11.5px;line-height:14px;color:#1e1e2e">Date</div>
<div class="a" style="left:416px;top:227px;font-size:11.5px;line-height:14px;color:#1e1e2e">Time</div>
<div class="a" style="left:495px;top:227px;font-size:11.5px;line-height:14px;color:#1e1e2e">Action</div>
<div class="a" style="left:825px;top:227px;font-size:11.5px;line-height:14px;color:#1e1e2e">Details</div>
<div class="a" style="left:1811px;top:227px;font-size:11.5px;line-height:14px;color:#1e1e2e">Belongs to</div>
<div class="a" style="left:411px;top:223px;width:1px;height:22px;background:#d4d4dc"></div>
<div class="a" style="left:489px;top:223px;width:1px;height:22px;background:#d4d4dc"></div>
<div class="a" style="left:819px;top:223px;width:1px;height:22px;background:#d4d4dc"></div>
<div class="a" style="left:1806px;top:223px;width:1px;height:22px;background:#d4d4dc"></div>
<svg class="a" style="left:0;top:0" width="500" height="240" viewBox="0 0 500 240"><path d="M394.5 232H401.5L398 236Z" fill="#1e1e2e"/><path d="M472.5 232H479.5L476 236Z" fill="#1e1e2e"/></svg>
<div class="a" style="left:328px;top:246px;width:1588px;height:740px;overflow:hidden">
<div class="row" style="left:0;top:0px;background:#bad0e8"><div class="c d" style="left:2px;width:81px">10.03.2020</div><div class="c d" style="left:86px;width:75px">10:38:46</div><div class="c" style="left:165px;width:326px">Relation to document <b>srodkiTrwale2</b> added by <b>Administrator</b></div><div class="c" style="left:495px;width:983px"></div><div class="c" style="left:1481px;width:107px">Szpital</div><div class="vl" style="left:83px;background:#e2e8f0"></div><div class="vl" style="left:161px;background:#e2e8f0"></div><div class="vl" style="left:491px;background:#e2e8f0"></div><div class="vl" style="left:1478px;background:#e2e8f0"></div></div>
<div class="row" style="left:0;top:24px;background:#eeeeee"><div class="c d" style="left:2px;width:81px">10.03.2020</div><div class="c d" style="left:86px;width:75px">10:38:43</div><div class="c" style="left:165px;width:326px">Relation to document <b>Dostawa luty</b> added by <b>Administrator</b></div><div class="c" style="left:495px;width:983px"></div><div class="c" style="left:1481px;width:107px">Szpital</div><div class="vl" style="left:83px;background:#d6d6dc"></div><div class="vl" style="left:161px;background:#d6d6dc"></div><div class="vl" style="left:491px;background:#d6d6dc"></div><div class="vl" style="left:1478px;background:#d6d6dc"></div></div>
<div class="row" style="left:0;top:48px;background:#f9f9f9"><div class="c d" style="left:2px;width:81px">10.03.2020</div><div class="c d" style="left:86px;width:75px">10:38:41</div><div class="c" style="left:165px;width:326px">Relation to document <b>Faktura1</b> added by <b>Administrator</b></div><div class="c" style="left:495px;width:983px"></div><div class="c" style="left:1481px;width:107px">Szpital</div><div class="vl" style="left:83px;background:#d6d6dc"></div><div class="vl" style="left:161px;background:#d6d6dc"></div><div class="vl" style="left:491px;background:#d6d6dc"></div><div class="vl" style="left:1478px;background:#d6d6dc"></div></div>
<div class="row" style="left:0;top:72px;background:#eeeeee"><div class="c d" style="left:2px;width:81px">10.03.2020</div><div class="c d" style="left:86px;width:75px">10:33:37</div><div class="c" style="left:165px;width:326px">Removed <b>Licencja</b></div><div class="c" style="left:495px;width:983px"><b>Licencja ogólne, Użycie = 3, Osoba odpowiedzialna = Administrator, Rule_ManyInstallationsValue = 2, Rule_AutoInstallationAssignment = True, Rule_AssignmentToUser = True, Users = 3, Rule_ManyInstallations = True</b></div><div class="c" style="left:1481px;width:107px">Szpital</div><div class="vl" style="left:83px;background:#d6d6dc"></div><div class="vl" style="left:161px;background:#d6d6dc"></div><div class="vl" style="left:491px;background:#d6d6dc"></div><div class="vl" style="left:1478px;background:#d6d6dc"></div></div>
<div class="row" style="left:0;top:96px;background:#f9f9f9"><div class="c d" style="left:2px;width:81px">10.03.2020</div><div class="c d" style="left:86px;width:75px">09:59:10</div><div class="c" style="left:165px;width:326px">Migrated <b>Licencja</b></div><div class="c" style="left:495px;width:983px"><b>Licencja ogólne</b> from <b>(Nieprzypisane)</b> to <b>Szpital</b></div><div class="c" style="left:1481px;width:107px">Szpital</div><div class="vl" style="left:83px;background:#d6d6dc"></div><div class="vl" style="left:161px;background:#d6d6dc"></div><div class="vl" style="left:491px;background:#d6d6dc"></div><div class="vl" style="left:1478px;background:#d6d6dc"></div></div>
<div class="row" style="left:0;top:120px;background:#eeeeee"><div class="c d" style="left:2px;width:81px">10.03.2020</div><div class="c d" style="left:86px;width:75px">09:59:10</div><div class="c" style="left:165px;width:326px">Migrated <b>Licencja</b></div><div class="c" style="left:495px;width:983px"><b>Licencja ogólne</b> from <b>(Nieprzypisane)</b> to <b>Szpital</b></div><div class="c" style="left:1481px;width:107px">Szpital</div><div class="vl" style="left:83px;background:#d6d6dc"></div><div class="vl" style="left:161px;background:#d6d6dc"></div><div class="vl" style="left:491px;background:#d6d6dc"></div><div class="vl" style="left:1478px;background:#d6d6dc"></div></div>
<div class="row" style="left:0;top:144px;background:#f9f9f9"><div class="c d" style="left:2px;width:81px">09.03.2020</div><div class="c d" style="left:86px;width:75px">11:32:52</div><div class="c" style="left:165px;width:326px"><b>Osoba odpowiedzialna</b> field changed of <b>Licencja</b></div><div class="c" style="left:495px;width:983px"><b>Licencja ogólne</b> from <b>Mikuz</b> to <b>Administrator</b></div><div class="c" style="left:1481px;width:107px">(Nieprzypisane)</div><div class="vl" style="left:83px;background:#d6d6dc"></div><div class="vl" style="left:161px;background:#d6d6dc"></div><div class="vl" style="left:491px;background:#d6d6dc"></div><div class="vl" style="left:1478px;background:#d6d6dc"></div></div>
<div class="row" style="left:0;top:168px;background:#eeeeee"><div class="c d" style="left:2px;width:81px">09.03.2020</div><div class="c d" style="left:86px;width:75px">11:32:49</div><div class="c" style="left:165px;width:326px"><b>Osoba odpowiedzialna</b> field changed of <b>Licencja</b></div><div class="c" style="left:495px;width:983px"><b>Licencja ogólne</b> from <b>Mikuz</b> to <b>Administrator</b></div><div class="c" style="left:1481px;width:107px">(Nieprzypisane)</div><div class="vl" style="left:83px;background:#d6d6dc"></div><div class="vl" style="left:161px;background:#d6d6dc"></div><div class="vl" style="left:491px;background:#d6d6dc"></div><div class="vl" style="left:1478px;background:#d6d6dc"></div></div>
<div class="row" style="left:0;top:192px;background:#f9f9f9"><div class="c d" style="left:2px;width:81px">09.03.2020</div><div class="c d" style="left:86px;width:75px">11:29:03</div><div class="c" style="left:165px;width:326px">Removed <b>Licencja</b></div><div class="c" style="left:495px;width:983px"><b>asd, Użycie = 1, Rule_ManyInstallationsValue = 1, Rule_InstallationAssignment = True, Rule_AutoInstallationAssignment = True, Rule_AssignmentToUser = True, Users = 1, Rule_ManyInstallations = True</b></div><div class="c" style="left:1481px;width:107px">(Nieprzypisane)</div><div class="vl" style="left:83px;background:#d6d6dc"></div><div class="vl" style="left:161px;background:#d6d6dc"></div><div class="vl" style="left:491px;background:#d6d6dc"></div><div class="vl" style="left:1478px;background:#d6d6dc"></div></div>
<div class="row" style="left:0;top:216px;background:#eeeeee"><div class="c d" style="left:2px;width:81px">05.03.2020</div><div class="c d" style="left:86px;width:75px">14:34:05</div><div class="c" style="left:165px;width:326px">Added <b>Licencja</b></div><div class="c" style="left:495px;width:983px">asd</div><div class="c" style="left:1481px;width:107px">(Nieprzypisane)</div><div class="vl" style="left:83px;background:#d6d6dc"></div><div class="vl" style="left:161px;background:#d6d6dc"></div><div class="vl" style="left:491px;background:#d6d6dc"></div><div class="vl" style="left:1478px;background:#d6d6dc"></div></div>
<div class="row" style="left:0;top:240px;background:#f9f9f9"><div class="c d" style="left:2px;width:81px">05.03.2020</div><div class="c d" style="left:86px;width:75px">11:04:56</div><div class="c" style="left:165px;width:326px"><b>Nazwa</b> field changed of <b>Licencja</b></div><div class="c" style="left:495px;width:983px"><b>Licencja ogólne</b> from <b>Licencje ogólne</b> to <b>Licencja ogólne</b></div><div class="c" style="left:1481px;width:107px">(Nieprzypisane)</div><div class="vl" style="left:83px;background:#d6d6dc"></div><div class="vl" style="left:161px;background:#d6d6dc"></div><div class="vl" style="left:491px;background:#d6d6dc"></div><div class="vl" style="left:1478px;background:#d6d6dc"></div></div>
<div class="row" style="left:0;top:264px;background:#eeeeee"><div class="c d" style="left:2px;width:81px">05.03.2020</div><div class="c d" style="left:86px;width:75px">11:02:43</div><div class="c" style="left:165px;width:326px"><b>Nazwa</b> field changed of <b>Licencja</b></div><div class="c" style="left:495px;width:983px"><b>Licencje ogólne</b> from <b>Licencje mozilla</b> to <b>Licencje ogólne</b></div><div class="c" style="left:1481px;width:107px">(Nieprzypisane)</div><div class="vl" style="left:83px;background:#d6d6dc"></div><div class="vl" style="left:161px;background:#d6d6dc"></div><div class="vl" style="left:491px;background:#d6d6dc"></div><div class="vl" style="left:1478px;background:#d6d6dc"></div></div>
<div class="row" style="left:0;top:288px;background:#f9f9f9"><div class="c d" style="left:2px;width:81px">05.03.2020</div><div class="c d" style="left:86px;width:75px">10:43:54</div><div class="c" style="left:165px;width:326px">Added <b>Licencja</b></div><div class="c" style="left:495px;width:983px">Licencje google</div><div class="c" style="left:1481px;width:107px">(Nieprzypisane)</div><div class="vl" style="left:83px;background:#d6d6dc"></div><div class="vl" style="left:161px;background:#d6d6dc"></div><div class="vl" style="left:491px;background:#d6d6dc"></div><div class="vl" style="left:1478px;background:#d6d6dc"></div></div>
<div class="row" style="left:0;top:312px;background:#eeeeee"><div class="c d" style="left:2px;width:81px">05.03.2020</div><div class="c d" style="left:86px;width:75px">10:43:17</div><div class="c" style="left:165px;width:326px">Added <b>Licencja</b></div><div class="c" style="left:495px;width:983px">Licencje mozilla</div><div class="c" style="left:1481px;width:107px">(Nieprzypisane)</div><div class="vl" style="left:83px;background:#d6d6dc"></div><div class="vl" style="left:161px;background:#d6d6dc"></div><div class="vl" style="left:491px;background:#d6d6dc"></div><div class="vl" style="left:1478px;background:#d6d6dc"></div></div>
<div class="row" style="left:0;top:336px;background:#f9f9f9"><div class="c d" style="left:2px;width:81px">05.03.2020</div><div class="c d" style="left:86px;width:75px">10:42:09</div><div class="c" style="left:165px;width:326px">Added <b>Licencja</b></div><div class="c" style="left:495px;width:983px">Licencja testowa</div><div class="c" style="left:1481px;width:107px">Szpital</div><div class="vl" style="left:83px;background:#d6d6dc"></div><div class="vl" style="left:161px;background:#d6d6dc"></div><div class="vl" style="left:491px;background:#d6d6dc"></div><div class="vl" style="left:1478px;background:#d6d6dc"></div></div>
<div class="row" style="left:0;top:360px;background:#eeeeee"><div class="c d" style="left:2px;width:81px">05.03.2020</div><div class="c d" style="left:86px;width:75px">10:32:14</div><div class="c" style="left:165px;width:326px">Removed <b>Licencja</b></div><div class="c" style="left:495px;width:983px"><b>testówkla2222, Użycie = 1, Osoba odpowiedzialna = Administrator, Rule_ManyInstallationsValue = 2, Rule_InstallationAssignment = True, Rule_AutoInstallationAssignment = True, Users = 6, Rule_ManyInstallations = True</b></div><div class="c" style="left:1481px;width:107px">Izolatka</div><div class="vl" style="left:83px;background:#d6d6dc"></div><div class="vl" style="left:161px;background:#d6d6dc"></div><div class="vl" style="left:491px;background:#d6d6dc"></div><div class="vl" style="left:1478px;background:#d6d6dc"></div></div>
<div class="row" style="left:0;top:384px;background:#f9f9f9"><div class="c d" style="left:2px;width:81px">05.03.2020</div><div class="c d" style="left:86px;width:75px">10:32:14</div><div class="c" style="left:165px;width:326px">Removed <b>Licencja</b></div><div class="c" style="left:495px;width:983px"><b>test2, Osoba odpowiedzialna = Administrator, Rule_ManyInstallationsValue = 1, Rule_InstallationAssignment = True, Rule_AutoInstallationAssignment = True, Rule_AssignmentToUser = True, Rule_ManyInstallations = True</b></div><div class="c" style="left:1481px;width:107px">(Nieprzypisane)</div><div class="vl" style="left:83px;background:#d6d6dc"></div><div class="vl" style="left:161px;background:#d6d6dc"></div><div class="vl" style="left:491px;background:#d6d6dc"></div><div class="vl" style="left:1478px;background:#d6d6dc"></div></div>
<div class="row" style="left:0;top:408px;background:#eeeeee"><div class="c d" style="left:2px;width:81px">05.03.2020</div><div class="c d" style="left:86px;width:75px">10:32:14</div><div class="c" style="left:165px;width:326px">Removed <b>Licencja</b></div><div class="c" style="left:495px;width:983px"><b>Firefoxxx, Użycie = 1, Rule_ManyInstallationsValue = 1, Rule_InstallationAssignment = True, Rule_AutoInstallationAssignment = True, Rule_AssignmentToUser = True, Rule_ManyInstallations = True, Nazwa = Firefoxxx</b></div><div class="c" style="left:1481px;width:107px">(Nieprzypisane)</div><div class="vl" style="left:83px;background:#d6d6dc"></div><div class="vl" style="left:161px;background:#d6d6dc"></div><div class="vl" style="left:491px;background:#d6d6dc"></div><div class="vl" style="left:1478px;background:#d6d6dc"></div></div>
<div class="row" style="left:0;top:432px;background:#f9f9f9"><div class="c d" style="left:2px;width:81px">05.03.2020</div><div class="c d" style="left:86px;width:75px">10:32:14</div><div class="c" style="left:165px;width:326px">Removed <b>Licencja</b></div><div class="c" style="left:495px;width:983px"><b>Mozilla Firefox 73.0.1 (x86 pl), Rule_ManyInstallationsValue = 1, Rule_InstallationAssignment = True, Rule_AssignmentToUser = True, Rule_ManyInstallations = True, Nazwa = Mozilla Firefox 73.0.1 (x86 pl)</b></div><div class="c" style="left:1481px;width:107px">Izolatka</div><div class="vl" style="left:83px;background:#d6d6dc"></div><div class="vl" style="left:161px;background:#d6d6dc"></div><div class="vl" style="left:491px;background:#d6d6dc"></div><div class="vl" style="left:1478px;background:#d6d6dc"></div></div>
<div class="row" style="left:0;top:456px;background:#eeeeee"><div class="c d" style="left:2px;width:81px">05.03.2020</div><div class="c d" style="left:86px;width:75px">10:32:14</div><div class="c" style="left:165px;width:326px">Removed <b>Licencja</b></div><div class="c" style="left:495px;width:983px"><b>Mozilla Firefox 73.0.1 (x86 pl), Rule_ManyInstallationsValue = 1, Rule_InstallationAssignment = True, Rule_AutoInstallationAssignment = True, Rule_AssignmentToUser = True, Rule_ManyInstallations = True</b></div><div class="c" style="left:1481px;width:107px">(Nieprzypisane)</div><div class="vl" style="left:83px;background:#d6d6dc"></div><div class="vl" style="left:161px;background:#d6d6dc"></div><div class="vl" style="left:491px;background:#d6d6dc"></div><div class="vl" style="left:1478px;background:#d6d6dc"></div></div>
<div class="row" style="left:0;top:480px;background:#f9f9f9"><div class="c d" style="left:2px;width:81px">05.03.2020</div><div class="c d" style="left:86px;width:75px">10:32:14</div><div class="c" style="left:165px;width:326px">Removed <b>Licencja</b></div><div class="c" style="left:495px;width:983px"><b>bez apki, Użycie = 1, Rule_ManyInstallationsValue = 1, Rule_InstallationAssignment = True, Rule_AutoInstallationAssignment = True, Rule_AssignmentToUser = True, Users = 1, Rule_ManyInstallations = True</b></div><div class="c" style="left:1481px;width:107px">(Nieprzypisane)</div><div class="vl" style="left:83px;background:#d6d6dc"></div><div class="vl" style="left:161px;background:#d6d6dc"></div><div class="vl" style="left:491px;background:#d6d6dc"></div><div class="vl" style="left:1478px;background:#d6d6dc"></div></div>
<div class="row" style="left:0;top:504px;background:#eeeeee"><div class="c d" style="left:2px;width:81px">05.03.2020</div><div class="c d" style="left:86px;width:75px">10:32:14</div><div class="c" style="left:165px;width:326px">Removed <b>Licencja</b></div><div class="c" style="left:495px;width:983px"><b>Nowa testowa, Rule_ManyInstallationsValue = 1, Rule_InstallationAssignment = True, Rule_AutoInstallationAssignment = True, Rule_AssignmentToUser = True, Rule_ManyInstallations = True, Nazwa = Nowa testowa</b></div><div class="c" style="left:1481px;width:107px">(Nieprzypisane)</div><div class="vl" style="left:83px;background:#d6d6dc"></div><div class="vl" style="left:161px;background:#d6d6dc"></div><div class="vl" style="left:491px;background:#d6d6dc"></div><div class="vl" style="left:1478px;background:#d6d6dc"></div></div>
<div class="row" style="left:0;top:528px;background:#f9f9f9"><div class="c d" style="left:2px;width:81px">05.03.2020</div><div class="c d" style="left:86px;width:75px">10:32:13</div><div class="c" style="left:165px;width:326px">Removed <b>Licencja</b></div><div class="c" style="left:495px;width:983px"><b>Axence nVision Agent, Użycie = 1, Rule_ManyInstallationsValue = 1, Rule_InstallationAssignment = True, Rule_AutoInstallationAssignment = True, Rule_AssignmentToUser = True, Rule_ManyInstallations = True</b></div><div class="c" style="left:1481px;width:107px">(Nieprzypisane)</div><div class="vl" style="left:83px;background:#d6d6dc"></div><div class="vl" style="left:161px;background:#d6d6dc"></div><div class="vl" style="left:491px;background:#d6d6dc"></div><div class="vl" style="left:1478px;background:#d6d6dc"></div></div>
<div class="row" style="left:0;top:552px;background:#eeeeee"><div class="c d" style="left:2px;width:81px">05.03.2020</div><div class="c d" style="left:86px;width:75px">10:32:13</div><div class="c" style="left:165px;width:326px">Removed <b>Licencja</b></div><div class="c" style="left:495px;width:983px"><b>Google Chrome, Rule_ManyInstallationsValue = 1, Rule_InstallationAssignment = True, Rule_AutoInstallationAssignment = True, Rule_AssignmentToUser = True, Rule_ManyInstallations = True, Custom = True</b></div><div class="c" style="left:1481px;width:107px">(Nieprzypisane)</div><div class="vl" style="left:83px;background:#d6d6dc"></div><div class="vl" style="left:161px;background:#d6d6dc"></div><div class="vl" style="left:491px;background:#d6d6dc"></div><div class="vl" style="left:1478px;background:#d6d6dc"></div></div>
<div class="row" style="left:0;top:576px;background:#f9f9f9"><div class="c d" style="left:2px;width:81px">04.03.2020</div><div class="c d" style="left:86px;width:75px">11:58:49</div><div class="c" style="left:165px;width:326px"><b>Numer inwentarzowy</b> field changed of <b>Licencja</b></div><div class="c" style="left:495px;width:983px"><b>testówkla2222</b> from <b>2</b> to <b>2635</b></div><div class="c" style="left:1481px;width:107px">Izolatka</div><div class="vl" style="left:83px;background:#d6d6dc"></div><div class="vl" style="left:161px;background:#d6d6dc"></div><div class="vl" style="left:491px;background:#d6d6dc"></div><div class="vl" style="left:1478px;background:#d6d6dc"></div></div>
<div class="row" style="left:0;top:600px;background:#eeeeee"><div class="c d" style="left:2px;width:81px">04.03.2020</div><div class="c d" style="left:86px;width:75px">11:58:35</div><div class="c" style="left:165px;width:326px"><b>Osoba odpowiedzialna</b> field changed of <b>Licencja</b></div><div class="c" style="left:495px;width:983px"><b>testówkla2222</b> from <b>empty</b> to <b>Administrator</b></div><div class="c" style="left:1481px;width:107px">Izolatka</div><div class="vl" style="left:83px;background:#d6d6dc"></div><div class="vl" style="left:161px;background:#d6d6dc"></div><div class="vl" style="left:491px;background:#d6d6dc"></div><div class="vl" style="left:1478px;background:#d6d6dc"></div></div>
<div class="row" style="left:0;top:624px;background:#f9f9f9"><div class="c d" style="left:2px;width:81px">04.03.2020</div><div class="c d" style="left:86px;width:75px">11:58:30</div><div class="c" style="left:165px;width:326px"><b>Osoba odpowiedzialna</b> field changed of <b>Licencja</b></div><div class="c" style="left:495px;width:983px"><b>testówkla2222</b> from <b>empty</b> to <b>Administrator</b></div><div class="c" style="left:1481px;width:107px">Izolatka</div><div class="vl" style="left:83px;background:#d6d6dc"></div><div class="vl" style="left:161px;background:#d6d6dc"></div><div class="vl" style="left:491px;background:#d6d6dc"></div><div class="vl" style="left:1478px;background:#d6d6dc"></div></div>
<div class="row" style="left:0;top:648px;background:#eeeeee"><div class="c d" style="left:2px;width:81px">04.03.2020</div><div class="c d" style="left:86px;width:75px">11:57:09</div><div class="c" style="left:165px;width:326px">Migrated <b>Licencja</b></div><div class="c" style="left:495px;width:983px"><b>testówkla2222</b> from <b>Oddział 1</b> to <b>Izolatka</b></div><div class="c" style="left:1481px;width:107px">Izolatka</div><div class="vl" style="left:83px;background:#d6d6dc"></div><div class="vl" style="left:161px;background:#d6d6dc"></div><div class="vl" style="left:491px;background:#d6d6dc"></div><div class="vl" style="left:1478px;background:#d6d6dc"></div></div>
<div class="row" style="left:0;top:672px;background:#f9f9f9"><div class="c d" style="left:2px;width:81px">04.03.2020</div><div class="c d" style="left:86px;width:75px">11:57:09</div><div class="c" style="left:165px;width:326px">Migrated <b>Licencja</b></div><div class="c" style="left:495px;width:983px"><b>testówkla2222</b> from <b>Oddział 1</b> to <b>Izolatka</b></div><div class="c" style="left:1481px;width:107px">Izolatka</div><div class="vl" style="left:83px;background:#d6d6dc"></div><div class="vl" style="left:161px;background:#d6d6dc"></div><div class="vl" style="left:491px;background:#d6d6dc"></div><div class="vl" style="left:1478px;background:#d6d6dc"></div></div>
<div class="row" style="left:0;top:696px;background:#eeeeee"><div class="c d" style="left:2px;width:81px">04.03.2020</div><div class="c d" style="left:86px;width:75px">11:56:57</div><div class="c" style="left:165px;width:326px">Migrated <b>Licencja</b></div><div class="c" style="left:495px;width:983px"><b>testówkla2222</b> from <b>(Nieprzypisane)</b> to <b>Oddział 1</b></div><div class="c" style="left:1481px;width:107px">Oddział 1</div><div class="vl" style="left:83px;background:#d6d6dc"></div><div class="vl" style="left:161px;background:#d6d6dc"></div><div class="vl" style="left:491px;background:#d6d6dc"></div><div class="vl" style="left:1478px;background:#d6d6dc"></div></div>
<div class="row" style="left:0;top:720px;background:#f9f9f9"><div class="c d" style="left:2px;width:81px">04.03.2020</div><div class="c d" style="left:86px;width:75px">11:56:57</div><div class="c" style="left:165px;width:326px">Migrated <b>Licencja</b></div><div class="c" style="left:495px;width:983px"><b>testówkla2222</b> from <b>(Nieprzypisane)</b> to <b>Oddział 1</b></div><div class="c" style="left:1481px;width:107px">Oddział 1</div><div class="vl" style="left:83px;background:#d6d6dc"></div><div class="vl" style="left:161px;background:#d6d6dc"></div><div class="vl" style="left:491px;background:#d6d6dc"></div><div class="vl" style="left:1478px;background:#d6d6dc"></div></div>
</div>
<div class="a" style="left:327px;top:987px;width:1590px;height:31px;background:#f9f9f9"></div>
<div class="a" style="left:327px;top:988px;width:30px;height:30px;background:#ededed"></div>
<svg class="a" style="left:336px;top:996px" width="12" height="14" viewBox="0 0 12 14"><path d="M2 5.5L6 1.5L10 5.5M2 11.5L6 7.5L10 11.5" fill="none" stroke="#111" stroke-width="1.4"/></svg>
<div class="a" style="left:1040px;top:997px;width:200px;text-align:center;font-size:12.5px;line-height:15px;font-weight:bold;color:#111">Event Log</div>
<div class="a" style="left:1484px;top:948px;font-size:19.7px;line-height:22px;color:rgba(120,120,120,0.45)">Aktywuj system Windows</div>
<div class="a" style="left:1484px;top:972.5px;font-size:14.7px;line-height:17px;color:rgba(120,120,120,0.45)">Przejdź do ustawień, aby aktywować system Windows.</div>
<svg class="a" style="left:320px;top:575px" width="10" height="20" viewBox="0 0 10 20"><rect x="3.3" y="2" width="2.6" height="1" fill="#6a6a70"/><rect x="3.3" y="4" width="2.6" height="1" fill="#6a6a70"/><rect x="3.3" y="6" width="2.6" height="1" fill="#6a6a70"/><rect x="3.3" y="8" width="2.6" height="1" fill="#6a6a70"/><rect x="3.3" y="10" width="2.6" height="1" fill="#6a6a70"/><rect x="3.3" y="12" width="2.6" height="1" fill="#6a6a70"/></svg>
</body></html>
